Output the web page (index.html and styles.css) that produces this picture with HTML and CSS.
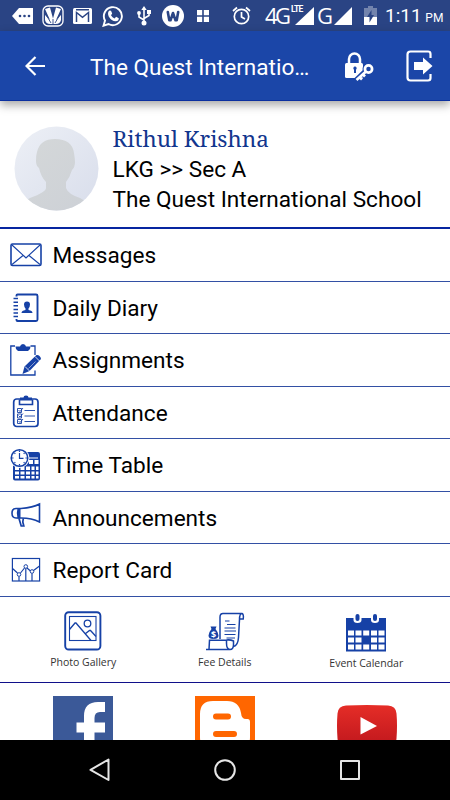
FILE: index.html
```
<!DOCTYPE html>
<html lang="en">

<head>
    <meta charset="UTF-8">
    <title>The Quest International School</title>
    <link rel="stylesheet" href="styles.css">
</head>

<body>
    <div class="statusbar">
        <svg class="tag" width="22" height="18" viewBox="0 0 22 18">
            <path fill="#fff" d="M7 1h14v16H7L0 9z"/>
            <g fill="#2a4484"><circle cx="8" cy="9" r="1.3"/><circle cx="12.500" cy="9" r="1.3"/><circle cx="17" cy="9" r="1.3"/></g>
        </svg>
        <svg class="app" width="22" height="22" viewBox="0 0 22 22">
            <rect x="1" y="1" width="20" height="20" rx="5" fill="none" stroke="#fff" stroke-width="1.3"/>
            <path d="M3 4l5-1.500 3 11 3-11L19 4l-5 11 5-5v5q-1 4-5 4H8q-4 0-5-4v-5l5 5z" fill="#fff"/>
            <path d="M3 8l6 10M19 8l-6 10M11 14v5" stroke="#2a4484" stroke-width=".9"/>
        </svg>
        <svg class="mail" width="19" height="16" viewBox="0 0 19 16">
            <rect width="19" height="16" rx="1.500" fill="#fff"/>
            <path d="M3.500 14V4.500l6 4.800 6-4.800V14M3 1.800h13" fill="none" stroke="#2a4484" stroke-width="1.500"/>
        </svg>
        <svg class="whatsapp" width="22" height="22" viewBox="0 0 22 22">
            <path d="M1.500 20.700l1.500-5.200A9 9 0 1 1 6.500 19z" fill="none" stroke="#fff" stroke-width="1.900"/>
            <path d="M7.500 5.500l1.500.3 1.200 2.800-1.200 1.600q1.300 2.300 3.600 3.200l1.500-1.600 2.700 1.400q0 3-3.100 3.100-4.200-.3-7-4.900-1.700-3.900.8-5.900z" fill="#fff"/>
        </svg>
        <svg class="usb" width="14" height="20" viewBox="0 0 14 20">
            <path d="M7 18V3M7 14L2 11V7.500M7 12.500L12 9.500V6" fill="none" stroke="#fff" stroke-width="1.600"/>
            <path d="M7 0l2.700 4H4.300zM10 4h4v4h-4z" fill="#fff"/>
            <circle cx="2" cy="7" r="1.900" fill="#fff"/><circle cx="7" cy="17" r="2.500" fill="#fff"/>
        </svg>
        <svg class="wynk" width="22" height="22" viewBox="0 0 22 22">
            <circle cx="11" cy="11" r="11" fill="#fff"/>
            <path d="M5.800 7l1.500 8.300h1.200L11 8l2.500 7.300h1.200L16.200 7" fill="none" stroke="#2a4484" stroke-width="2.600" stroke-linejoin="round" stroke-linecap="round"/>
        </svg>
        <svg class="tiles" width="12" height="12" viewBox="0 0 12 12">
            <path d="M0 0h5.200v5.200H0zM6.800 0H12v5.200H6.800zM0 6.800h5.200V12H0zM6.800 6.800H12V12H6.800z" fill="#fff"/>
        </svg>
        <svg class="alarm" width="19" height="19" viewBox="0 0 19 19">
            <g fill="none" stroke="#fff" stroke-width="1.700"><circle cx="9.500" cy="10.500" r="7.200"/><path d="M9.500 6v5l3.500 2M1 5l4-3.500M18 5l-4-3.500"/></g>
        </svg>
        <span class="net net-4g">4G</span>
        <span class="lte">LTE</span>
        <svg class="signal first" width="19" height="18" viewBox="0 0 19 18"><path d="M0 18L19 0v18z" fill="#fff"/></svg>
        <span class="net net-g">G</span>
        <svg class="signal" width="18" height="18" viewBox="0 0 18 18"><path d="M0 18L18 0v18z" fill="#fff"/></svg>
        <svg class="battery" width="13" height="19" viewBox="0 0 13 19">
            <path d="M4 0h5v2h4v17H0V2h4z" fill="#7384ad"/><path d="M0 11h13v8H0z" fill="#fff"/>
            <path d="M7.500 4v5H10l-4.500 7.500V11H3z" fill="#2a4484"/>
        </svg>
        <span class="time">1:11 <small>PM</small></span>
    </div>

    <header class="appbar">
        <svg class="back" width="20" height="20" viewBox="0 0 20 20"><path d="M20 10H1.700M10.500 1L1.500 10l9 9" fill="none" stroke="#fff" stroke-width="2.200"/></svg>
        <h1>The Quest Internatio…</h1>
        <svg class="lock" width="30" height="30" viewBox="0 0 30 30">
            <path d="M5 13V8a5.500 5.500 0 0 1 11 0v5" fill="none" stroke="#fff" stroke-width="2.500"/>
            <rect x="1" y="12" width="18" height="15" rx="1.500" fill="#fff"/>
            <path d="M11 15.500a1.800 1.800 0 0 1 1 3.200V22h-2v-3.300a1.800 1.800 0 0 1 1-3.200z" fill="#1b46a8"/>
            <path d="M21 20.500L12 29" stroke="#1b46a8" stroke-width="5"/>
            <circle cx="24.500" cy="18" r="6" fill="#1b46a8"/>
            <circle cx="24.500" cy="18" r="3.600" fill="none" stroke="#fff" stroke-width="2.700"/>
            <path d="M22 20.500L12.500 29M15.500 26l2.500 2.500M18.500 23l2.500 2.500" stroke="#fff" stroke-width="2.700"/>
        </svg>
        <svg class="logout" width="27" height="32" viewBox="0 0 27 32">
            <path d="M24.500 8V4q0-2.500-2.500-2.500H4.500Q1.500 1.500 1.500 4.500v23q0 3 3 3H22q2.500 0 2.500-2.500v-4" fill="none" stroke="#fff" stroke-width="2.200"/>
            <path d="M8 12h9V7.500l9.500 8.500-9.500 8.500V20H8z" fill="#fff"/>
        </svg>
    </header>

    <section class="profile">
        <svg class="avatar" width="85" height="85" viewBox="0 0 85 85">
            <defs>
                <linearGradient id="sky" x1="0" y1="0" x2="1" y2="1"><stop offset="0" stop-color="#edf0f6"/><stop offset="1" stop-color="#d8ddeb"/></linearGradient>
                <linearGradient id="person" x1="0" y1="0" x2="1" y2="1"><stop offset="0" stop-color="#d5d8d9"/><stop offset="1" stop-color="#ccd0d6"/></linearGradient>
                <clipPath id="round"><circle cx="42.500" cy="42.500" r="42"/></clipPath>
            </defs>
            <g clip-path="url(#round)">
                <rect width="85" height="85" fill="url(#sky)"/>
                <path d="M0 85q8-9 16-13 16-6 16-10v-6q-5-5-7-14-3-2-3-7 0-6 1-9 3-13 18-13 17 0 19 14 1 6 1 9 0 5-3 8-2 7-6 12v6q2 6 14 10 6 3 10 7l9 9z" fill="url(#person)"/>
            </g>
        </svg>
        <div class="details">
            <div class="name">Rithul Krishna</div>
            <div class="class">LKG &gt;&gt; Sec A</div>
            <div class="school">The Quest International School</div>
        </div>
    </section>

    <ul class="menu">
        <li>
            <svg viewBox="0 0 32 32" class="line"><rect x="1" y="5" width="30" height="21.500" rx="1.500" stroke-width="1.600"/><path d="M2 6l12.500 11.500 1.500 1.500 1.500-1.500L30 6M2 25.500l11-9M30 25.500l-11-9" stroke-width="1.100"/></svg>
            <span>Messages</span>
        </li>
        <li>
            <svg viewBox="0 0 32 32" class="line"><path d="M6.500 5.500V4.500q0-1 1-1H26q1.500 0 1.500 1.500v23.500q0 1.500-1.500 1.500H7.500q-1 0-1-1v-1" stroke-width="1.900"/><path d="M3.500 7.500h4.500M3.500 11.200h4.500M3.500 14.800h4.500M3.500 18.500h4.500M3.500 22h4.500M3.500 25.500h4.500" stroke-width="1.500"/><path class="fill" d="M17 10.500a3 3 0 0 1 3 3q0 2-1.500 4V19q4 .5 4 3H11.500q0-2.500 4-3v-1.500Q14 15.500 14 13.500a3 3 0 0 1 3-3z"/></svg>
            <span>Daily Diary</span>
        </li>
        <li>
            <svg viewBox="0 0 32 32" class="line"><path d="M5 2H.8v29H25v-4.500M20.500 2H25v9" stroke-width="1.300"/><path class="fill" d="M5.500 2.500H10Q10.500 0 13 0t3 2.500h4.500L20 5l-2 2H8L6 5z"/><path class="fill" d="M12.500 30l2-7.500L26.500 11q1.500-.5 3 1t1.500 3L19.500 27z"/><path d="M15 22.500l4.500 4.500M25 12.500l4.500 4.500" stroke="#fff" stroke-width=".8"/><path d="M18.500 24.500l7-7" stroke="#fff" stroke-width=".5"/></svg>
            <span>Assignments</span>
        </li>
        <li>
            <svg viewBox="0 0 32 32" class="line"><rect x="3.700" y="3" width="24.300" height="27.500" rx="3" stroke-width="1.700"/><path d="M9.500 3.500V8.500h13v-5" stroke-width="1.600"/><path class="fill" d="M10 1.500h3.500q0-2 2.500-2t2.500 2H22v3H10z"/><path d="M7.500 12.500h4v4h-4zM7.500 18h4v4h-4zM7.500 23.500h4v4h-4zM8.500 14l1.500 1.500 3-3.500M8.500 19.500l1.500 1.500 3-3.500M8.500 25l1.500 1.500 3-3.500M14.500 14.500H25M14.500 20H25M14.500 25.500H25" stroke-width=".9"/></svg>
            <span>Attendance</span>
        </li>
        <li>
            <svg viewBox="0 0 32 32" class="line"><path class="fill" d="M15 3h13q2 0 2 2v24.500q0 2-2 2H5q-2 0-2-2V16h12z"/><path class="white" d="M19 8.500h9v1H19zM19 11h4v4h-4zM24.500 11h4v4h-4zM5 17.500h4v3.500H5zM10.500 17.500h4V21h-4zM16 17.500h4V21h-4zM21.500 17.500h3V21h-3zM26 17.500h2.500V21H26zM5 22.500h4v3H5zM10.500 22.500h4v3h-4zM16 22.500h4v3h-4zM21.500 22.500h3v3h-3zM26 22.500h2.500v3H26zM5 27h4v2.500H5zM10.500 27h4v2.500h-4zM16 27h4v2.500h-4zM21.500 27h3v2.500h-3zM26 27h2.500v2.500H26z"/><circle class="white" cx="9.500" cy="9" r="10"/><circle cx="9.500" cy="9" r="8.300" stroke-width="1.500"/><path d="M9.500 4v5.300h4M9.500 1.500v1.500M9.500 15v1.500M2 9h1.500M15.500 9H17M4.500 4l.8.800M14.500 4l-.8.800M4.500 14l.8-.8M14.500 14l-.8-.8" stroke-width="1.200"/></svg>
            <span>Time Table</span>
        </li>
        <li>
            <svg viewBox="0 0 32 32" class="line"><path d="M6 7.500h5q12-1 18.500-4.500v18Q22 17 11 17H6q-4 0-4-4.700T6 7.500z" stroke-width="1.600"/><path class="fill" d="M7.500 7h3v10.500h-3q-1.500-5 0-10.500z"/><path d="M9 17.500l2.200 7.500h2.600l-1-4 .5-3.500" stroke-width="1.700"/></svg>
            <span>Announcements</span>
        </li>
        <li>
            <svg viewBox="0 0 32 32" class="line"><rect x="2.400" y="4.500" width="27.200" height="22.500" stroke-width="1.200"/><path d="M2.500 14.500L7.500 19M10.500 19L14.500 14M17 14l3.500 3M23.500 16.500l6-4.500M9 22.500V27M15.800 14.500V27M22 19.500V27" stroke-width="1.200"/><circle cx="9" cy="20.500" r="1.800" stroke-width="1"/><circle cx="15.800" cy="12.500" r="1.800" stroke-width="1"/><circle cx="22" cy="17.500" r="1.800" stroke-width="1"/></svg>
            <span>Report Card</span>
        </li>
    </ul>

    <div class="shortcuts">
        <div class="shortcut">
            <svg width="38" height="40" viewBox="0 0 38 40" class="line"><rect x="1.200" y="1.200" width="35.200" height="37.300" rx="3.500" stroke-width="1.900"/><rect x="5.500" y="5.500" width="26.500" height="24" stroke-width="1.100"/><circle cx="23.500" cy="12.500" r="3.300" stroke-width="1.300"/><path d="M5.500 18.500l5.500-6.500h1L27 29.500M21 23l4.500-3.500h1L32 25.500" stroke-width="1.300"/></svg>
            <span>Photo Gallery</span>
        </div>
        <div class="shortcut fee">
            <svg width="38" height="40" viewBox="0 0 38 40" class="line"><path d="M14 28V6q0-3.500 3-3.500h19q2 1 1.200 5.500H34M36 2.500q-2.500 0-2.500 6l-1 18q-.5 8-5 9M3 38.500l.5-9.200h17v3q0 6.200 3.500 6.200 3.500 0 3.500-5v-3.500q-3-1.500-7-1M0 38.500h24" stroke-width="1.500"/><path d="M19 10h4.500M21 13.500h8.500M18.500 17h11M18.500 20H30M18.500 23.500H29.500M20.500 27h8.500" stroke-width="1.200"/><path class="fill" d="M4.500 15.500h6L9.500 18q3 3.500 3 6.500 0 3.500-5 3.500t-5-3.500q0-3 3-6.500z"/><text x="5" y="26.500" class="dollar">$</text></svg>
            <span>Fee Details</span>
        </div>
        <div class="shortcut calendar">
            <svg width="42" height="38" viewBox="0 0 42 38">
                <path class="fill" d="M1 4h40v33.500H1z"/>
                <path class="white" d="M8.500 4h8v2q0 3-4 3t-4-3zM26 4h8v2q0 3-4 3t-4-3z"/><rect class="fill" x="10.500" width="4" height="7" rx="2"/><rect class="fill" x="28" width="4" height="7" rx="2"/>
                <path class="white" d="M3 16.500h6v5H3zM10.500 16.500h6v5h-6zM18.200 16.500h6v5h-6zM26 16.500h6v5h-6zM33.500 16.500h6v5h-6zM3 23.500h6v5H3zM10.500 23.500h6v5h-6zM26 23.500h6v5h-6zM33.500 23.500h6v5h-6zM3 30.500h6v5H3zM10.500 30.500h6v5h-6zM18.200 30.500h6v5h-6zM26 30.500h6v5h-6zM33.500 30.500h6v5h-6z"/>
            </svg>
            <span>Event Calendar</span>
        </div>
    </div>

    <div class="social">
        <svg width="60" height="60" viewBox="0 0 60 60"><path d="M0 0h60v60H0z" fill="#3b5998"/><path d="M31 60V36.500h-7.500v-10H31V20Q31 6 45 6h7v10h-5q-5.500 0-5.500 6v4.500H52v10H41.500V60z" fill="#fff"/></svg>
        <svg width="60" height="60" viewBox="0 0 60 60"><path d="M0 0h60v60H0z" fill="#f60"/><path d="M18 5h14Q44 5 46 17q.500 6 5 6h1.500q2.500 0 2.500 3v15q0 14-14 14H19Q5 55 5 41V18Q5 5 18 5z" fill="#fff"/><path d="M21 20.500h12M21 38h18" stroke="#f60" stroke-width="6" stroke-linecap="round"/></svg>
        <svg class="youtube" width="60" height="43" viewBox="0 0 60 43">
            <defs><linearGradient id="red" x1="0" y1="0" x2="0" y2="1"><stop offset="0" stop-color="#e52d27"/><stop offset="1" stop-color="#bf171d"/></linearGradient></defs>
            <path d="M9 .5q21-1 42 0 8 .5 8.500 8 1 12 0 25-.5 7-8.500 8-21 1.500-42 0-8-1-8.500-8-1-13 0-25Q1 1 9 .5z" fill="url(#red)"/><path d="M23.500 12v17.500L40 21z" fill="#fff"/>
        </svg>
    </div>

    <footer class="navbar">
        <svg width="24" height="26" viewBox="0 0 24 26"><path d="M20.500 2.500v20.500L2.500 12.800z"/></svg>
        <svg width="24" height="26" viewBox="0 0 24 26"><circle cx="12" cy="13" r="9.800"/></svg>
        <svg width="24" height="26" viewBox="0 0 24 26"><rect x="3" y="4" width="18" height="18"/></svg>
    </footer>
</body>

</html>
```
FILE: styles.css
```
* {
    box-sizing: border-box;
}

body {
    margin: 0;
    width: 450px;
    height: 800px;
    overflow: hidden;
    display: flex;
    flex-direction: column;
    background-color: #fff;
    color: #000;
    font-family: Roboto, sans-serif;
}

svg {
    display: block;
    flex: none;
}

/* android status bar */
.statusbar {
    display: flex;
    flex: none;
    align-items: center;
    height: 31px;
    padding-left: 12px;
    background-color: #2a4484;
    color: #fff;
    white-space: nowrap;
}

.app {
    margin-left: 8px;
}

.mail {
    margin-left: 9px;
}

.whatsapp {
    margin-left: 10px;
}

.usb {
    margin-left: 13px;
}

.wynk {
    margin-left: 11px;
}

.tiles {
    margin-left: 13px;
}

.alarm {
    margin-left: 23px;
}

.net {
    font-family: "Open Sans", sans-serif;
    font-size: 22px;
    line-height: 31px;
}

.net-4g {
    width: 25px;
    margin-left: 14px;
    letter-spacing: -2.5px;
}

.lte {
    width: 12px;
    margin-left: 1px;
    margin-bottom: 12px;
    font-size: 8.5px;
    font-weight: bold;
    line-height: 9px;
    letter-spacing: -0.7px;
}

.signal.first {
    margin-left: -8px;
}

.net-g {
    width: 16px;
    margin-left: 3px;
    margin-right: 1px;
}

.battery {
    margin-left: 12px;
}

.time {
    margin-left: 8px;
    font-size: 19px;
    word-spacing: -1px;
}

.time small {
    font-size: 12px;
}

/* header */
.appbar {
    display: flex;
    flex: none;
    align-items: center;
    height: 70px;
    padding: 1px 17px 0 25px;
    background-color: #1b46a8;
    border-bottom: 1px solid #0a2f9f;
    box-shadow: 0 4px 9px rgba(0, 0, 0, 0.35);
    color: #fff;
}

.appbar h1 {
    flex: 1;
    margin: 2px 0 0 45px;
    font-size: 22.6px;
    font-weight: normal;
    white-space: nowrap;
}

.logout {
    margin-left: 32px;
}

/* student */
.profile {
    display: flex;
    flex: none;
    height: 128px;
    padding: 23px 0 0 14px;
    border-bottom: 2px solid #0625a0;
}

.avatar {
    margin-top: 2px;
}

.details {
    margin-left: 13.5px;
    font-size: 22.6px;
    line-height: 30.5px;
    white-space: nowrap;
}

.name {
    color: #12368e;
    font-family: "Noto Serif", "DejaVu Serif Condensed", "DejaVu Serif", serif;
    font-size: 22.5px;
}

/* menu list */
.menu {
    flex: none;
    margin: 0;
    padding: 0;
    list-style: none;
}

.menu li {
    display: flex;
    align-items: center;
    height: 52.5px;
    padding-left: 10px;
    border-bottom: 1px solid #3350a4;
    font-size: 22.6px;
}

.menu svg {
    width: 32px;
    height: 32px;
    margin-right: 10.5px;
}

.menu span {
    padding-top: 2px;
}

.line {
    fill: none;
    stroke: #1641a6;
    overflow: visible;
}

.fill {
    fill: #1641a6;
    stroke: none;
}

.white {
    fill: #fff;
    stroke: none;
}

/* icons under the list */
.shortcuts {
    display: grid;
    flex: none;
    grid-template-columns: repeat(3, 141.5px);
    height: 86.5px;
    padding: 14px 0 0 12.5px;
    border-bottom: 1px solid #10108a;
}

.shortcut {
    display: flex;
    flex-direction: column;
    align-items: center;
    color: #333;
    font-family: "Open Sans", sans-serif;
    font-size: 10.5px;
    line-height: 22px;
}

.calendar {
    padding-top: 3px;
}

.dollar {
    fill: #fff;
    stroke: none;
    font-size: 9px;
    font-weight: bold;
}

.social {
    display: grid;
    flex: 1;
    grid-template-columns: repeat(3, 142px);
    min-height: 0;
    overflow: hidden;
    padding: 12.5px 0 0 12px;
    justify-items: center;
}

.youtube {
    margin-top: 9px;
}

.navbar {
    display: flex;
    flex: none;
    align-items: center;
    justify-content: center;
    gap: 101px;
    height: 60px;
    background-color: #000;
}

.navbar svg {
    fill: none;
    stroke: #e6e6e6;
    stroke-width: 2;
    stroke-linejoin: round;
}
```
